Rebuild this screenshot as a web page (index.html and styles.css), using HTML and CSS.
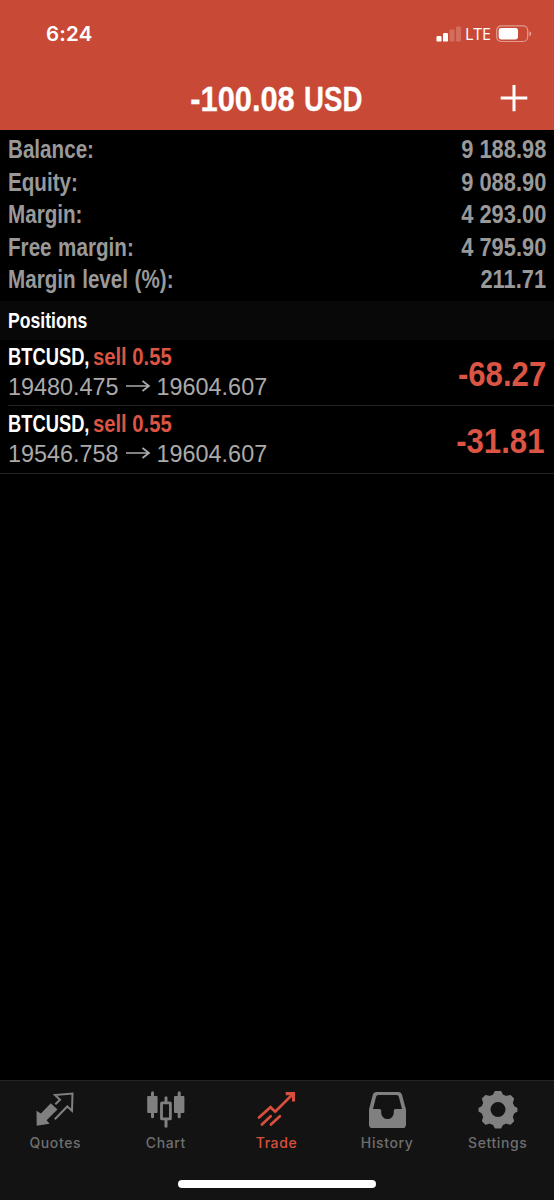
FILE: index.html
```html
<!DOCTYPE html>
<html lang="en">
  <head>
    <meta charset="UTF-8" />
    <meta name="viewport" content="width=device-width, initial-scale=1.0" />
    <title>Trade</title>
    <link rel="stylesheet" href="styles.css">
  </head>
  <body>
    <header class="header">
      <div class="status-bar">
        <span class="time">6:24</span>
        <div class="status-icons">
          <svg class="signal" width="26" height="16" viewBox="0 0 26 16" fill="#fff">
            <rect x="1.5" y="10" width="5" height="5.6" rx="1.2" />
            <rect x="8" y="7" width="5" height="8.6" rx="1.2" />
            <rect x="14.5" y="3.5" width="5" height="12" rx="1.2" opacity="0.2" />
            <rect x="21" y="0.5" width="5" height="15" rx="1.2" opacity="0.2" />
          </svg>
          <span class="network">LTE</span>
          <svg class="battery" width="36" height="18" viewBox="0 0 36 18">
            <rect x="0.7" y="0.9" width="31" height="15.6" rx="4.5" fill="none" stroke="#fff" stroke-opacity="0.45" stroke-width="1.2" />
            <rect x="2.7" y="2.9" width="19.3" height="11.6" rx="2.4" fill="#fff" />
            <path d="M33.4 6.2c2.4 1 2.4 4 0 5z" fill="#fff" fill-opacity="0.5" />
          </svg>
        </div>
      </div>
      <div class="title-bar">
        <h1><span class="amount">-100.08</span><span class="currency">USD</span></h1>
        <button class="add-btn" aria-label="New order">
          <svg width="28" height="28" viewBox="0 0 28 28" stroke="#fff" stroke-width="3">
            <path d="M0.7 13h26.6M14 0v26.3" />
          </svg>
        </button>
      </div>
    </header>

    <main>
      <dl class="account">
        <div class="account-row"><dt>Balance:</dt><dd>9 188.98</dd></div>
        <div class="account-row"><dt>Equity:</dt><dd>9 088.90</dd></div>
        <div class="account-row"><dt>Margin:</dt><dd>4 293.00</dd></div>
        <div class="account-row"><dt>Free margin:</dt><dd>4 795.90</dd></div>
        <div class="account-row"><dt>Margin level (%):</dt><dd>211.71</dd></div>
      </dl>

      <h2 class="section-title"><span>Positions</span></h2>

      <div class="position">
        <div>
          <p class="symbol"><span class="name">BTCUSD,</span><span class="sell">sell 0.55</span></p>
          <p class="prices">
            <span>19480.475</span>
            <svg width="24" height="12" viewBox="0 0 24 12"><path d="M0 5h23M16.5 0l6.5 5-6.5 5" /></svg>
            <span>19604.607</span>
          </p>
        </div>
        <span class="profit">-68.27</span>
      </div>
      <div class="position last">
        <div>
          <p class="symbol"><span class="name">BTCUSD,</span><span class="sell">sell 0.55</span></p>
          <p class="prices">
            <span>19546.758</span>
            <svg width="24" height="12" viewBox="0 0 24 12"><path d="M0 5h23M16.5 0l6.5 5-6.5 5" /></svg>
            <span>19604.607</span>
          </p>
        </div>
        <span class="profit">-31.81</span>
      </div>
    </main>

    <footer class="footer">
      <nav class="tabs">
        <a class="tab">
          <svg width="40" height="40" viewBox="0 0 40 40">
            <path d="M1.5 20.8l4.4 2.7 9.9-10.3 6.7 6.3-10.9 10.8 3 3.4-12.9 2z" fill="currentColor" />
            <path d="M20.3 14.2l4.7-4.4-5-4.7 17.5-1.6-.5 17.2-4.7-4.2-12.5 12.8" fill="none" stroke="currentColor" stroke-width="2" />
          </svg>
          <span>Quotes</span>
        </a>
        <a class="tab">
          <svg width="40" height="40" viewBox="0 0 40 40" fill="currentColor">
            <rect x="1.2" y="6" width="10.4" height="17" rx="1" />
            <rect x="5" y="1.3" width="3" height="27" rx="1.5" />
            <rect x="28" y="6" width="10.4" height="17" rx="1" />
            <rect x="31.7" y="1.3" width="3" height="27" rx="1.5" />
            <rect x="15.5" y="12.9" width="8.9" height="16" rx="0.5" fill="none" stroke="currentColor" stroke-width="2.8" />
            <rect x="18.5" y="6.2" width="3" height="6" rx="1.5" />
            <rect x="18.5" y="29" width="3" height="8.8" rx="1.5" />
          </svg>
          <span>Chart</span>
        </a>
        <a class="tab active">
          <svg width="40" height="40" viewBox="0 0 40 40" fill="none" stroke="currentColor" stroke-width="2.7" stroke-linecap="round">
            <path d="M3 27.5l11.5-10.3 4.7 4.5L36.7 4.2" />
            <path d="M29.7 3.6h7.8v7.8" stroke-linecap="butt" stroke-width="3.1" />
            <path d="M5.9 34.5l8.8-8.3M14.9 34.5l9-8.3" />
          </svg>
          <span>Trade</span>
        </a>
        <a class="tab">
          <svg width="40" height="40" viewBox="0 0 40 40">
            <path fill="currentColor" fill-rule="evenodd" d="M9.6 2h21.6a4 4 0 0 1 3.8 2.8l4 14.7V34.400a3.600 3.600 0 0 1-3.600 3.600H5.600a3.600 3.600 0 0 1-3.600-3.600V19.500L5.800 4.800A4 4 0 0 1 9.600 2zM11.400 5a2.500 2.500 0 0 0-2.400 1.900L6 18.900h6.400a1.800 1.800 0 0 1 1.800 1.800v2a6.300 6.300 0 0 0 12.600 0v-2a1.800 1.800 0 0 1 1.800-1.800H35L31.900 6.900A2.500 2.500 0 0 0 29.500 5z" />
          </svg>
          <span>History</span>
        </a>
        <a class="tab">
          <svg width="40" height="40" viewBox="0 0 40 40">
            <path fill="currentColor" stroke="currentColor" stroke-width="1.6" stroke-linejoin="round" fill-rule="evenodd" d="M17.3 1.9h5.4l1.6 3.3 3.8 1.6 4.2-1.100 3 3-1.300 4.200 1.600 3.800 3.100 1.800v2.600l-3.100 1.800-1.600 3.800 1.300 4.200-3 3-4.200-1.100-3.800 1.600-1.600 3.300h-5.400l-1.600-3.300-3.800-1.600-4.200 1.100-3-3 1.300-4.200-1.600-3.800-3.100-1.800v-2.600l3.100-1.800L6 12.900 4.700 8.700l3-3 4.200 1.100 3.800-1.600zM20 11.200a8.300 8.300 0 1 0 0 16.600a8.300 8.300 0 1 0 0-16.600z" />
          </svg>
          <span>Settings</span>
        </a>
      </nav>
      <div class="home-indicator"></div>
    </footer>
  </body>
</html>
```
FILE: styles.css
```css
* {
  box-sizing: border-box;
}
body {
  display: flex;
  flex-direction: column;
  height: 1200px;
  margin: 0;
  background: #000;
  color: #fff;
  font-family: "Liberation Sans", Arial, sans-serif;
}
h1, h2, p, dl, dd {
  margin: 0;
}
svg {
  display: block;
}
.header {
  height: 130px;
  background: #c84a36;
}
.status-bar {
  display: flex;
  justify-content: space-between;
  height: 66px;
  padding: 20px 22px 0 46px;
}
.time {
  font: 600 20.5px/27px Inter, sans-serif;
  letter-spacing: 0.2px;
}
.status-icons {
  display: flex;
  align-items: center;
  height: 27px;
}
.network {
  margin: 0 5px 0 4px;
  font: 500 16px/20px "Open Sans", sans-serif;
}
.title-bar {
  display: grid;
  grid-template-columns: 1fr auto 1fr;
  align-items: center;
  height: 64px;
}
.title-bar h1 {
  display: flex;
  grid-column: 2;
  gap: 9px;
  padding-top: 1px;
  font-size: 35px;
  line-height: 64px;
  -webkit-text-stroke: 0.3px;
}
.amount {
  transform: scaleX(0.88);
  transform-origin: right;
}
.currency {
  transform: scaleX(0.79);
  transform-origin: left;
}
.add-btn {
  justify-self: end;
  margin-right: 26px;
  padding: 0;
  border: none;
  background: none;
}
.account {
  height: 171px;
  padding: 3px 8px 0;
  color: #999;
  font-size: 25px;
  font-weight: bold;
}
.account-row {
  display: flex;
  justify-content: space-between;
  line-height: 32.6px;
}
.account dt {
  transform: scaleX(0.825);
  transform-origin: left;
  word-spacing: 1px;
}
.account dd {
  transform: scaleX(0.875);
  transform-origin: right;
}
.section-title {
  height: 39px;
  padding-left: 8px;
  background: #080808;
  font-size: 22px;
  line-height: 40px;
}
.section-title span {
  display: inline-block;
  transform: scaleX(0.8);
  transform-origin: left;
}
.position {
  display: flex;
  justify-content: space-between;
  align-items: center;
  height: 66px;
  margin-left: 8px;
  padding: 0 8px 1px 0;
  border-bottom: 1px solid #242424;
}
.position.last {
  height: 68px;
  margin-left: 0;
  padding: 0 8px 2px;
}
.symbol {
  display: flex;
  font-size: 23.5px;
  font-weight: bold;
  line-height: 30px;
}
.name {
  width: 85px;
  transform: scaleX(0.78);
  transform-origin: left;
}
.sell,
.profit {
  color: #dc5443;
}
.sell {
  transform: scaleX(0.86);
  transform-origin: left;
}
.prices {
  display: flex;
  align-items: center;
  gap: 7px;
  color: #aaa;
  font-size: 23.4px;
  line-height: 30px;
}
.prices svg {
  overflow: visible;
  fill: none;
  stroke: #aaa;
  stroke-width: 1.7;
}
.profit {
  padding-top: 4px;
  font-size: 35px;
  font-weight: bold;
  transform: scaleX(0.89);
  transform-origin: right;
}
.last .profit {
  padding-right: 2px;
}
.footer {
  height: 120px;
  margin-top: auto;
  border-top: 1px solid #252525;
  background: #131313;
}
.tabs {
  display: grid;
  grid-template-columns: repeat(5, 1fr);
  height: 99px;
  padding: 9px 1px 0 0;
}
.tab {
  display: flex;
  flex-direction: column;
  align-items: center;
  color: #808080;
  font: 500 14px/18px Inter, sans-serif;
  letter-spacing: 0.6px;
}
.tab span {
  margin-top: 4px;
  color: #6f6f6f;
}
.tab.active,
.tab.active span {
  color: #d94f3d;
}
.home-indicator {
  width: 198px;
  height: 8px;
  margin: 0 auto;
  border-radius: 4px;
  background: #fff;
}
```
